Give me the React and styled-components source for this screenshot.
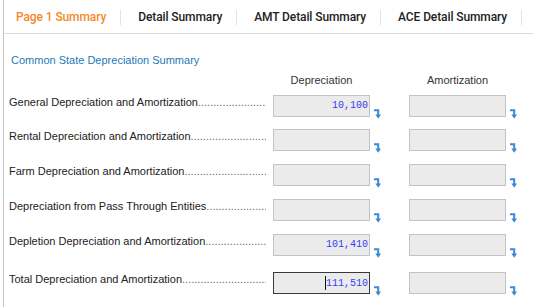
import React from 'react';
import styled, { createGlobalStyle } from 'styled-components';

const GlobalStyle = createGlobalStyle`
  body {
    margin: 0;
    background: #fff;
    font-family: 'Liberation Sans', Arial, sans-serif;
  }
`;

const TABS = ['Page 1 Summary', 'Detail Summary', 'AMT Detail Summary', 'ACE Detail Summary'];

const ROWS = [
  { label: 'General Depreciation and Amortization', dep: '10,100' },
  { label: 'Rental Depreciation and Amortization', dep: '' },
  { label: 'Farm Depreciation and Amortization', dep: '' },
  { label: 'Depreciation from Pass Through Entities', dep: '' },
  { label: 'Depletion Depreciation and Amortization', dep: '101,410' },
  { label: 'Total Depreciation and Amortization', dep: '111,510', total: true },
];

const LEADER = '.'.repeat(120);

const Arrow = () => (
  <ArrowIcon width='7' height='10' viewBox='0 0 7 10'>
    <path d='M0 1.2H4.2V6.5' fill='none' stroke='#3b8ad4' strokeWidth='2' />
    <path d='M1.4 5.6H7L4.2 9.8Z' fill='#3b8ad4' />
  </ArrowIcon>
);

const App = () => {
  return (
    <Page>
      <GlobalStyle />
      <TabBar>
        {TABS.map((t, i) => (
          <Tab key={t} active={i === 0}>
            {t}
          </Tab>
        ))}
      </TabBar>
      <Section>
        <SectionTitle>Common State Depreciation Summary</SectionTitle>
        <HeaderRow>
          <ColHead>Depreciation</ColHead>
          <ColHead>Amortization</ColHead>
        </HeaderRow>
        {ROWS.map((r) => (
          <Row key={r.label} total={r.total}>
            <Label>
              <span>{r.label}</span>
              <Leader>{LEADER}</Leader>
            </Label>
            <Field>
              <Box focused={r.total}>
                {r.total && <Caret />}
                {r.dep}
              </Box>
              <Arrow />
            </Field>
            <Field>
              <Box />
              <Arrow />
            </Field>
          </Row>
        ))}
      </Section>
    </Page>
  );
};

const Page = styled.div`
  margin-left: 3px;
  border-left: 1px solid #c2c2c2;
  min-height: 307px;
  box-sizing: border-box;
`;
const TabBar = styled.div`
  display: flex;
  align-items: center;
  height: 34px;
  box-sizing: border-box;
  padding: 2px 0 0 12px;
  border-bottom: 1px solid #dcdcdc;
`;
const Tab = styled.div`
  font-family: Roboto, 'Liberation Sans', sans-serif;
  font-weight: 500;
  font-size: 12px;
  letter-spacing: -0.1px;
  line-height: 15px;
  padding: 0 14px 0 17px;
  border-right: 1px solid #e2e2e2;
  color: ${(props) => (props.active ? '#f5891f' : '#222')};
  white-space: nowrap;
  flex-shrink: 0;
  &:first-child {
    padding-left: 0;
  }
`;
const Section = styled.div`
  padding: 20px 0 0 5px;
`;
const SectionTitle = styled.div`
  font-size: 11px;
  line-height: 13px;
  color: #1e79b8;
  padding-left: 2px;
`;
const HeaderRow = styled.div`
  display: flex;
  margin-top: 7px;
  padding-left: 264px;
  gap: 39px;
`;
const ColHead = styled.div`
  width: 97px;
  flex-shrink: 0;
  text-align: center;
  font-size: 11px;
  line-height: 13px;
  color: #333;
`;
const Row = styled.div`
  display: flex;
  align-items: flex-start;
  height: 34.75px;
  margin-top: ${(props) => (props.total ? '4px' : '0')};
  &:nth-of-type(3) {
    margin-top: 7.5px;
  }
`;
const Label = styled.div`
  width: 257px;
  flex-shrink: 0;
  margin-right: 7px;
  display: flex;
  overflow: hidden;
  white-space: nowrap;
  padding-top: 1px;
  font-size: 11px;
  line-height: 13px;
  color: #222;
`;
const Leader = styled.span`
  flex: 1;
  overflow: hidden;
  color: #666;
`;
const Field = styled.div`
  display: flex;
  align-items: flex-end;
  width: 136px;
  flex-shrink: 0;
`;
const Box = styled.div`
  width: 97px;
  height: 22px;
  flex-shrink: 0;
  box-sizing: border-box;
  border: 1px solid ${(props) => (props.focused ? '#3a3a3a' : '#c3c3c3')};
  background: #ebebeb;
  display: flex;
  align-items: center;
  justify-content: flex-end;
  padding-right: 1px;
  font-family: 'Liberation Mono', 'Courier New', monospace;
  font-size: 10px;
  color: #3b3bf5;
`;
const Caret = styled.span`
  display: inline-block;
  width: 1px;
  height: 14px;
  background: #111;
`;
const ArrowIcon = styled.svg`
  margin-left: 4px;
  margin-bottom: -2px;
  flex-shrink: 0;
`;

export default App;
